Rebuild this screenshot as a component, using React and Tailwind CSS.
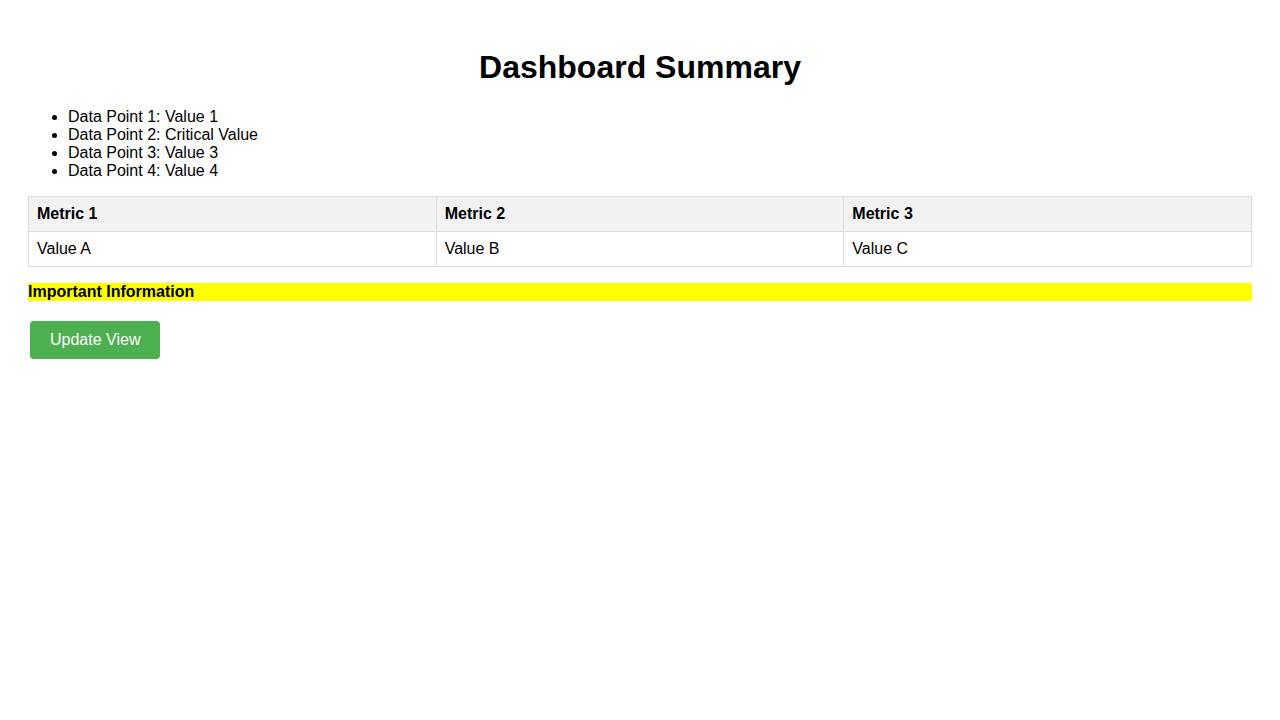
// Dashboard summary page: title, data point list, metrics table,
// highlighted notice and an update button.

const dataPoints = [
    "Data Point 1: Value 1",
    "Data Point 2: Critical Value",
    "Data Point 3: Value 3",
    "Data Point 4: Value 4",
];

const metrics = [
    { name: "Metric 1", value: "Value A" },
    { name: "Metric 2", value: "Value B" },
    { name: "Metric 3", value: "Value C" },
];

export default function App() {
    return (
        <div
            className="min-h-screen bg-white p-[28px] text-[16px] leading-[normal] text-black"
            style={{ fontFamily: '"Liberation Sans", Arial, sans-serif' }}
        >
            <h1 className="mt-[21.44px] mb-[21.44px] text-center text-[32px] font-bold leading-[normal]">
                Dashboard Summary
            </h1>
            <ul className="mb-4 list-disc pl-10">
                {dataPoints.map((point) => (
                    <li key={point}>{point}</li>
                ))}
            </ul>
            <table className="w-full table-fixed border-collapse">
                <thead>
                    <tr>
                        {metrics.map((metric) => (
                            <th
                                key={metric.name}
                                className="border border-[#dddddd] bg-[#f2f2f2] p-2 text-left font-bold"
                            >
                                {metric.name}
                            </th>
                        ))}
                    </tr>
                </thead>
                <tbody>
                    <tr>
                        {metrics.map((metric) => (
                            <td key={metric.name} className="border border-[#dddddd] p-2 text-left">
                                {metric.value}
                            </td>
                        ))}
                    </tr>
                </tbody>
            </table>
            <div className="mt-4 bg-[#ffff00] font-bold">Important Information</div>
            <button
                type="button"
                className="mt-5 ml-[2px] rounded bg-[#4caf50] px-5 py-[10px] text-white"
            >
                Update View
            </button>
        </div>
    );
}
